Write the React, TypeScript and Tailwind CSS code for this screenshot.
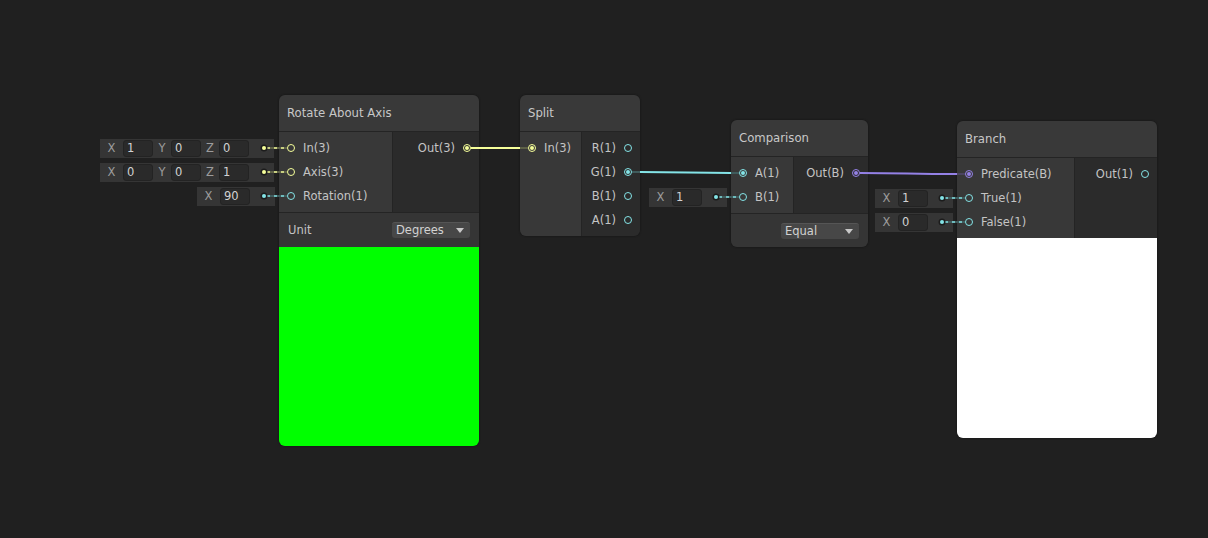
import React from 'react'

type PortType = 'v3' | 'v1' | 'b'

const TYPES: { [k in PortType]: { ring: string; fill: string; hex: string; dim: string } } = {
  v3: { ring: 'border-[#f6ff9a]', fill: 'bg-[#f6ff9a]', hex: '#f6ff9a', dim: '#5d6046' },
  v1: { ring: 'border-[#84e4e7]', fill: 'bg-[#84e4e7]', hex: '#84e4e7', dim: '#3f5b5c' },
  b: { ring: 'border-[#9481e6]', fill: 'bg-[#9481e6]', hex: '#9481e6', dim: '#4a4360' }
}

type Port = { label: string; type: PortType; connected?: boolean }

const PortDot = ({ type, connected }: { type: PortType; connected?: boolean }): JSX.Element => (
  <span
    className={`flex h-2 w-2 shrink-0 items-center justify-center rounded-full border ${TYPES[type].ring}`}
  >
    {connected && <span className={`h-[4px] w-[4px] rounded-full ${TYPES[type].fill}`} />}
  </span>
)

const Dropdown = ({ value }: { value: string }): JSX.Element => (
  <div className="flex h-[16px] w-[78px] items-center justify-between rounded-[3px] border-t border-[#555555] bg-[#474747] pl-1 pr-[6px] text-[11.5px] text-[#d2d2d2]">
    <span className="mt-[1px]">{value}</span>
    <span className="h-0 w-0 border-x-[4px] border-t-[5px] border-x-transparent border-t-[#c8c8c8]" />
  </div>
)

const Node = ({
  pos,
  title,
  inCol,
  inputs,
  outputs,
  children
}: {
  pos: string
  title: string
  inCol: string
  inputs: Port[]
  outputs: Port[]
  children?: React.ReactNode
}): JSX.Element => (
  <div className={`absolute flex flex-col overflow-hidden rounded-[6px] shadow-[0_0_2px_#111] ${pos}`}>
    <div className="flex h-[37px] items-center border-b border-[#242424] bg-[#393939] pl-2 pt-[2px] text-[11.7px] text-[#c8c8c8]">
      {title}
    </div>
    <div className="flex">
      <div className={`flex flex-col bg-[#383838] py-1 ${inCol}`}>
        {inputs.map((p) => (
          <div key={p.label} className="flex h-6 items-center gap-2 pl-2 text-[11.5px] text-[#c4c4c4]">
            <PortDot type={p.type} connected={p.connected} />
            <span className="mt-[2px]">{p.label}</span>
          </div>
        ))}
      </div>
      <div className="flex flex-1 flex-col items-end border-l border-[#242424] bg-[#2b2b2b] py-1">
        {outputs.map((p) => (
          <div key={p.label} className="flex h-6 items-center gap-2 pr-2 text-[11.5px] text-[#c4c4c4]">
            <span className="mt-[2px]">{p.label}</span>
            <PortDot type={p.type} connected={p.connected} />
          </div>
        ))}
      </div>
    </div>
    {children}
  </div>
)

const Field = ({ pos, comps }: { pos: string; comps: [string, string][] }): JSX.Element => (
  <div className={`absolute flex h-[19px] items-center bg-[#353535] text-[11.5px] ${pos}`}>
    {comps.map(([axis, value], i) => (
      <React.Fragment key={axis}>
        <span className={`text-center text-[#9c9c9c] ${i === 0 ? 'w-[23px]' : 'w-[18px]'}`}>{axis}</span>
        <span className="flex h-[17px] w-[30px] items-center rounded-[3px] border border-[#232323] bg-[#2a2a2a] pl-[3px] text-[#d2d2d2]">
          {value}
        </span>
      </React.Fragment>
    ))}
    <span className="w-[25px]" />
  </div>
)

const connectors: [number, number, number, PortType][] = [
  [264, 148, 287, 'v3'],
  [264, 172, 287, 'v3'],
  [264, 196, 287, 'v1'],
  [716, 197, 739, 'v1'],
  [942, 198, 965, 'v1'],
  [942, 222, 965, 'v1']
]

const Wires = (): JSX.Element => (
  <svg className="pointer-events-none absolute inset-0" width={1208} height={538}>
    {/* yellow: Rotate Out(3) -> Split In(3) */}
    <line x1={471} y1={148} x2={520} y2={148} stroke={TYPES.v3.hex} strokeWidth={2} />
    <line x1={520} y1={148} x2={528} y2={148} stroke={TYPES.v3.dim} strokeWidth={2} />
    {/* cyan: Split G(1) -> Comparison A(1) */}
    <line x1={632} y1={172} x2={640} y2={172} stroke={TYPES.v1.dim} strokeWidth={2} />
    <path d="M640 172 C 685 172, 690 173, 731 173" fill="none" stroke={TYPES.v1.hex} strokeWidth={2} />
    <line x1={731} y1={173} x2={739} y2={173} stroke={TYPES.v1.dim} strokeWidth={2} />
    {/* purple: Comparison Out(B) -> Branch Predicate(B) */}
    <path d="M860 173 C 905 173, 910 174, 957 174" fill="none" stroke={TYPES.b.hex} strokeWidth={2} />
    <line x1={957} y1={174} x2={965} y2={174} stroke={TYPES.b.dim} strokeWidth={2} />
    {connectors.map(([x, y, px, t]) => (
      <g key={`${x}-${y}`}>
        <line x1={x + 2} y1={y} x2={px} y2={y} stroke={TYPES[t].dim} strokeWidth={2} />
        <line x1={x + 3} y1={y} x2={px} y2={y} stroke={TYPES[t].hex} strokeWidth={2} strokeDasharray="3 4" opacity={0.7} />
        <circle cx={x} cy={y} r={3.5} fill="#1c1c1c" />
        <circle cx={x} cy={y} r={2} fill={TYPES[t].hex} />
      </g>
    ))}
  </svg>
)

const App = (): JSX.Element => {
  return (
    <div className="relative h-[538px] w-[1208px] overflow-hidden bg-[#202020] font-['DejaVu_Sans',sans-serif]">
      <Field pos="left-[100px] top-[139px]" comps={[['X', '1'], ['Y', '0'], ['Z', '0']]} />
      <Field pos="left-[100px] top-[163px]" comps={[['X', '0'], ['Y', '0'], ['Z', '1']]} />
      <Field pos="left-[197px] top-[187px]" comps={[['X', '90']]} />
      <Field pos="left-[649px] top-[188px]" comps={[['X', '1']]} />
      <Field pos="left-[875px] top-[189px]" comps={[['X', '1']]} />
      <Field pos="left-[875px] top-[213px]" comps={[['X', '0']]} />

      <Node
        pos="left-[279px] top-[95px] w-[200px]"
        title="Rotate About Axis"
        inCol="w-[113px]"
        inputs={[
          { label: 'In(3)', type: 'v3' },
          { label: 'Axis(3)', type: 'v3' },
          { label: 'Rotation(1)', type: 'v1' }
        ]}
        outputs={[{ label: 'Out(3)', type: 'v3', connected: true }]}
      >
        <div className="flex h-[35px] items-center justify-between border-t border-[#242424] bg-[#353535] px-[9px] text-[11.5px] text-[#c4c4c4]">
          <span className="mt-[2px]">Unit</span>
          <Dropdown value="Degrees" />
        </div>
        <div className="h-[199px] bg-[#00ff00]" />
      </Node>

      <Node
        pos="left-[520px] top-[95px] w-[120px]"
        title="Split"
        inCol="w-[61px]"
        inputs={[{ label: 'In(3)', type: 'v3', connected: true }]}
        outputs={[
          { label: 'R(1)', type: 'v1' },
          { label: 'G(1)', type: 'v1', connected: true },
          { label: 'B(1)', type: 'v1' },
          { label: 'A(1)', type: 'v1' }
        ]}
      />

      <Node
        pos="left-[731px] top-[120px] w-[137px]"
        title="Comparison"
        inCol="w-[62px]"
        inputs={[
          { label: 'A(1)', type: 'v1', connected: true },
          { label: 'B(1)', type: 'v1' }
        ]}
        outputs={[{ label: 'Out(B)', type: 'b', connected: true }]}
      >
        <div className="flex h-[34px] items-center justify-end border-t border-[#242424] bg-[#353535] pr-[9px]">
          <Dropdown value="Equal" />
        </div>
      </Node>

      <Node
        pos="left-[957px] top-[121px] w-[200px]"
        title="Branch"
        inCol="w-[117px]"
        inputs={[
          { label: 'Predicate(B)', type: 'b', connected: true },
          { label: 'True(1)', type: 'v1' },
          { label: 'False(1)', type: 'v1' }
        ]}
        outputs={[{ label: 'Out(1)', type: 'v1' }]}
      >
        <div className="h-[200px] bg-white" />
      </Node>

      <Wires />
    </div>
  )
}

export default App
